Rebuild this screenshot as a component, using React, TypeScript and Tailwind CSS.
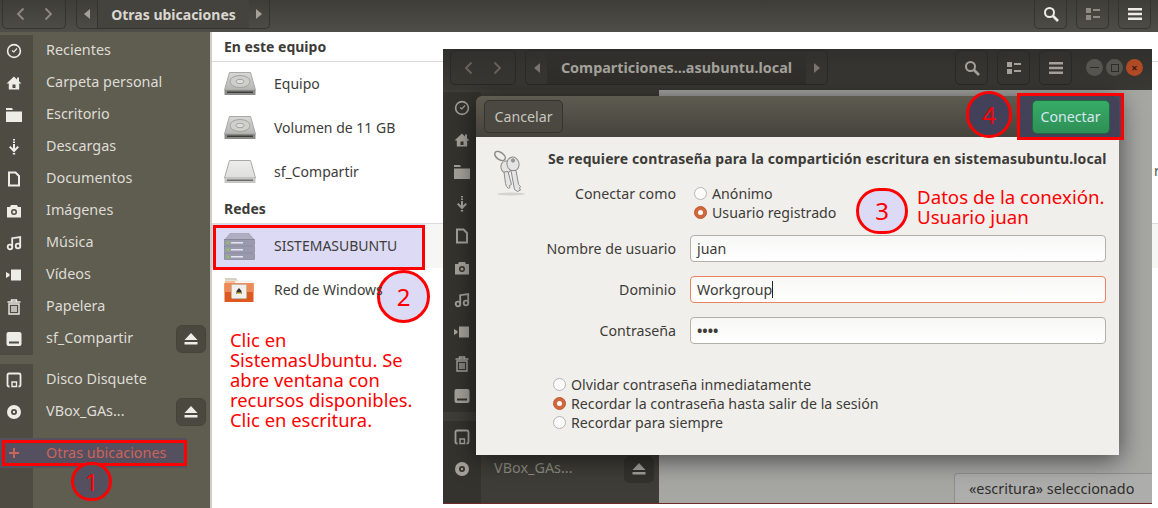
import React from 'react';

const FONT = "font-['Noto_Sans','Open_Sans',sans-serif]";

type IconName =
  | 'clock' | 'home' | 'folder' | 'download' | 'doc' | 'camera' | 'music'
  | 'video' | 'trash' | 'drive' | 'floppy' | 'disc' | 'plus';

function SideIcon({ name, className = '' }: { name: IconName; className?: string }) {
  const common = { width: 16, height: 16, viewBox: '0 0 16 16', className };
  switch (name) {
    case 'clock':
      return (
        <svg {...common} fill="none" stroke="currentColor" strokeWidth="1.6">
          <circle cx="8" cy="8" r="6.4" />
          <path d="M11 5.5 7.8 9 6 7.5" strokeWidth="1.2" />
        </svg>
      );
    case 'home':
      return (
        <svg {...common} fill="currentColor">
          <path fillRule="evenodd" d="M8 1.500.5 8.500h2.300v6h10.400v-6h2.300L13 6.300V2.500h-2v1.900zM6.500 9.500h3v3.500h-3z" />
        </svg>
      );
    case 'folder':
      return (
        <svg {...common} fill="currentColor">
          <path d="M0 1h6l1 2H0zM0 4.500h16V15H0z" />
        </svg>
      );
    case 'download':
      return (
        <svg {...common} fill="currentColor">
          <path d="M7 0h2v1.500H7zM7 2.500h2V4H7zM7 5h2v4.500L11.500 7 13 8.300 8 13.500 3 8.300 4.500 7 7 9.500zM6.800 14h2.400v1.500H6.800z" />
        </svg>
      );
    case 'doc':
      return (
        <svg {...common} fill="none" stroke="currentColor" strokeWidth="2">
          <path d="M3 1.500h6.500l3.500 3.500v9.500H3z" />
        </svg>
      );
    case 'camera':
      return (
        <svg {...common} fill="currentColor">
          <path fillRule="evenodd" d="M5 2h6l1 2h3v10.500H1V4h3zM8 6a3 3 0 1 0 0 6 3 3 0 0 0 0-6zm0 1.500a1.500 1.500 0 1 1 0 3 1.500 1.500 0 0 1 0-3z" />
        </svg>
      );
    case 'music':
      return (
        <svg {...common} fill="none" stroke="currentColor" strokeWidth="1.800">
          <circle cx="4" cy="12" r="2.300" />
          <circle cx="12" cy="11" r="2.300" />
          <path d="M6.200 12V3.200L14.200 2v9" />
        </svg>
      );
    case 'video':
      return (
        <svg {...common} fill="currentColor">
          <path d="M5 2.500h10v11H5zM0 5l3.500 2v2L0 11z" />
        </svg>
      );
    case 'trash':
      return (
        <svg {...common} fill="none" stroke="currentColor" strokeWidth="1.400">
          <path d="M1.500 3h13M5.500 3V1h5v2M3 5h10v10H3zM6 7v6M8 7v6M10 7v6" />
        </svg>
      );
    case 'drive':
      return (
        <svg {...common} fill="currentColor">
          <path fillRule="evenodd" d="M2.500 1h11A2 2 0 0 1 15.500 3v10a2 2 0 0 1-2 2h-11a2 2 0 0 1-2-2V3a2 2 0 0 1 2-2zM3 10.500v2h10v-2z" />
        </svg>
      );
    case 'floppy':
      return (
        <svg {...common} fill="none" stroke="currentColor" strokeWidth="1.800">
          <path d="M3 1.500h10a1.500 1.500 0 0 1 1.500 1.500v10a1.500 1.500 0 0 1-1.500 1.500h-.5M3.500 14.500H3A1.500 1.500 0 0 1 1.500 13V3A1.500 1.500 0 0 1 3 1.500" />
          <path d="M6 14.500V10h4.500v4.500z" strokeWidth="1.400" />
        </svg>
      );
    case 'disc':
      return (
        <svg {...common} fill="currentColor">
          <path fillRule="evenodd" d="M8 1a7 7 0 1 1 0 14A7 7 0 0 1 8 1zm0 4a3 3 0 1 0 0 6 3 3 0 0 0 0-6zm0 1.800a1.200 1.200 0 1 1 0 2.400 1.200 1.200 0 0 1 0-2.400z" />
        </svg>
      );
    case 'plus':
      return (
        <svg {...common} fill="currentColor">
          <path d="M7 3h2v4h4v2H9v4H7V9H3V7h4z" />
        </svg>
      );
  }
}

function Eject({ className = '' }: { className?: string }) {
  return (
    <svg width="14" height="12" viewBox="0 0 14 12" fill="currentColor" className={className}>
      <path d="M7 0l6.500 7H.5zM.5 9h13v2.500H.5z" />
    </svg>
  );
}

function HdIcon({ light = false }: { light?: boolean }) {
  const id = light ? 'hd-light' : 'hd-dark';
  return (
    <svg width="32" height="24" viewBox="0 0 32 24">
      <defs>
        <linearGradient id={id} x1="0" y1="0" x2="0" y2="1">
          <stop offset="0" stopColor={light ? '#eeeeec' : '#d8d8d6'} />
          <stop offset="1" stopColor={light ? '#dededc' : '#b4b4b1'} />
        </linearGradient>
      </defs>
      <path d="M5.500 .5h21L31.500 18H.5z" fill={`url(#${id})`} stroke="#a8a8a5" />
      {!light && <ellipse cx="16" cy="9.500" rx="10" ry="6" fill="#cfcfcc" stroke="#a3a39f" />}
      {!light && <ellipse cx="16" cy="9.500" rx="4" ry="2.200" fill="#dededc" stroke="#a3a39f" />}
      <rect x=".5" y="18" width="31" height="5" fill={light ? '#c6c6c3' : '#8a8a87'} />
      <rect x="3" y="19.500" width="26" height="1.500" fill={light ? '#6f6f6c' : '#3d3d3b'} />
    </svg>
  );
}

function ServerIcon() {
  return (
    <svg width="31" height="27" viewBox="0 0 31 27">
      <path d="M6 .5h19l5 6H1z" fill="#aeaec0" stroke="#8f8fa0" strokeWidth="0.500" />
      {[6.500, 13.500, 20.500].map(y => (
        <g key={y}>
          <rect x=".5" y={y} width="30" height="6" fill="#9a9aae" stroke="#6e6e7e" strokeWidth="0.500" />
          <rect x="2.500" y={y + 2} width="3" height="2.500" fill="#8fc060" />
          <rect x="7" y={y + 2.500} width="12" height="1.500" fill="#e6e6f2" />
        </g>
      ))}
    </svg>
  );
}

function WinFolderIcon() {
  return (
    <svg width="30" height="24" viewBox="0 0 30 24">
      <path d="M1 0h11l2 3H1z" fill="#d8cfc4" />
      <rect x="1" y="2.500" width="28" height="2" fill="#f3f1ee" />
      <rect x="1" y="3.500" width="10" height="1" fill="#f0873f" />
      <rect x=".5" y="5" width="29" height="19" fill="#dc5a22" />
      <rect x=".5" y="5" width="29" height="9" fill="#ed8a55" />
      <rect x="7.500" y="6.500" width="15" height="14" rx="1" fill="#f2efea" stroke="#c2b8ac" />
      <path d="M12.500 13l2.500-3 2.500 3v3h-5z" fill="#2e2e2c" />
      <rect x="13" y="14.500" width="4" height="1.500" fill="#d9c84d" />
    </svg>
  );
}

function KeysIcon() {
  return (
    <svg width="36" height="46" viewBox="0 0 36 46" fill="#e4e4e2" stroke="#8a8a86" strokeWidth="1">
      <ellipse cx="7" cy="6" rx="6" ry="3.500" transform="rotate(35 7 6)" fill="none" strokeWidth="1.500" />
      <ellipse cx="13" cy="17" rx="5" ry="6" transform="rotate(-12 13 17)" />
      <path d="M11 22l4-.5 3.500 13-2 1 .5 2-1.500 1-2-2-1-3z" />
      <ellipse cx="20" cy="14" rx="6" ry="7" transform="rotate(-12 20 14)" />
      <circle cx="20" cy="10.500" r="1.600" fill="#9a9a96" />
      <path d="M18 20.500h5l2.500 14 2 2-1 1.500 1 2-3 1.500-3-2z" />
      <ellipse cx="18" cy="44" rx="14" ry="1.500" fill="#d4d2cf" stroke="none" />
    </svg>
  );
}

function NavGlyph({ d, className = '' }: { d: string; className?: string }) {
  return (
    <svg width="16" height="16" viewBox="0 0 16 16" fill="none" stroke="currentColor" strokeWidth="1.800" className={className}>
      <path d={d} />
    </svg>
  );
}

function Tri({ dir }: { dir: 'left' | 'right' }) {
  return (
    <svg width="6" height="10" viewBox="0 0 6 10" fill="currentColor">
      <path d={dir === 'left' ? 'M6 0v10L0 5z' : 'M0 0v10l6-5z'} />
    </svg>
  );
}

function Search({ size = 16 }: { size?: number }) {
  return (
    <svg width={size} height={size} viewBox="0 0 16 16" fill="none" stroke="currentColor" strokeWidth="2">
      <circle cx="6.500" cy="6.500" r="4.500" />
      <path d="M10 10l5 5" strokeWidth="2.600" />
    </svg>
  );
}

function GridView() {
  return (
    <svg width="14" height="12" viewBox="0 0 14 12" fill="currentColor">
      <path d="M0 0h5v5H0zM0 7h5v5H0zM7 1h7v2H7zM7 8h7v2H7z" />
    </svg>
  );
}

function Burger() {
  return (
    <svg width="14" height="12" viewBox="0 0 14 12" fill="currentColor">
      <path d="M0 0h14v2.500H0zM0 4.800h14v2.500H0zM0 9.500h14V12H0z" />
    </svg>
  );
}

const PLACES: { icon: IconName; label: string; eject?: boolean; gap?: boolean }[] = [
  { icon: 'clock', label: 'Recientes' },
  { icon: 'home', label: 'Carpeta personal' },
  { icon: 'folder', label: 'Escritorio' },
  { icon: 'download', label: 'Descargas' },
  { icon: 'doc', label: 'Documentos' },
  { icon: 'camera', label: 'Imágenes' },
  { icon: 'music', label: 'Música' },
  { icon: 'video', label: 'Vídeos' },
  { icon: 'trash', label: 'Papelera' },
  { icon: 'drive', label: 'sf_Compartir', eject: true },
  { icon: 'floppy', label: 'Disco Disquete', gap: true },
  { icon: 'disc', label: 'VBox_GAs...', eject: true },
];

function Sidebar() {
  return (
    <aside className="w-[210px] shrink-0 flex flex-col bg-[#5f5c50] text-[14.4px] text-[#dedcd6] pt-[3px]">
      {PLACES.map(p => (
        <div key={p.label} className={'h-8 flex items-center ' + (p.gap ? 'mt-[9px]' : '')}>
          <div className="w-[33px] h-full shrink-0 bg-[#4d4b42] flex items-center justify-center text-[#eeece7] pr-[5px]">
            <SideIcon name={p.icon} />
          </div>
          <span className="ml-[13px] flex-1 -mt-[2px]">{p.label}</span>
          {p.eject && (
            <div className="w-[30px] h-[28px] mr-[4px] rounded-md bg-[#4a483f] border border-[#45433b] flex items-center justify-center text-[#eeece7]">
              <Eject />
            </div>
          )}
        </div>
      ))}
      <div className="h-[10px] flex"><div className="w-[33px] bg-[#4d4b42]" /></div>
      <div className="w-[187px] h-[30px] flex items-center bg-[#55505f] text-[#c9655c]">
        <div className="w-[33px] flex items-center justify-center pr-[5px]">
          <SideIcon name="plus" />
        </div>
        <span className="ml-[13px]">Otras ubicaciones</span>
      </div>
      <div className="flex-1 flex"><div className="w-[33px] bg-[#4d4b42]" /></div>
    </aside>
  );
}

function SectionTitle({ children }: { children: React.ReactNode }) {
  return (
    <div className="h-[30px] pl-[12px] flex items-center font-bold text-[14px] text-[#3d3c38] border-b border-[#dcdbd8]">
      {children}
    </div>
  );
}

function DeviceRow({ icon, label }: { icon: React.ReactNode; label: string }) {
  return (
    <div className="h-11 flex items-center text-[14px] text-[#3d3c38]">
      <div className="w-[62px] pl-[12px] flex items-center">{icon}</div>
      <span className="relative z-10 -mt-[2px]">{label}</span>
    </div>
  );
}

function Circle({ n, className }: { n: string; className: string }) {
  return (
    <div className={'absolute rounded-full border-[3px] border-[#fe0000] flex items-center justify-center text-[#fe0000] text-[24px] ' + className}>
      {n}
    </div>
  );
}

function Field({ label, value, focused = false, caret = false, dots = false }: { label: string; value: string; focused?: boolean; caret?: boolean; dots?: boolean }) {
  return (
    <div className="h-[27px] flex items-center">
      <label className="w-[200px] text-right text-[14.200px] text-[#3d3c38]">{label}</label>
      <div className={'ml-[14px] w-[416px] h-[27px] rounded-[4px] border px-[6px] flex items-center text-[14.200px] text-[#3d3c38] bg-gradient-to-b from-[#f7f7f6] to-white ' + (focused ? 'border-[#e9845e]' : 'border-[#b3b0aa]')}>
        <span className={dots ? 'font-bold' : ''}>{value}</span>
        {caret && <span className="w-px h-[17px] bg-[#222]" />}
      </div>
    </div>
  );
}

function Radio({ label, on = false }: { label: string; on?: boolean }) {
  return (
    <div className="h-[19px] flex items-center text-[14.200px] text-[#3d3c38]">
      <span className={'w-[13px] h-[13px] rounded-full border flex items-center justify-center mr-[5px] ' + (on ? 'bg-[#d3673c] border-[#b95a33]' : 'bg-[#fbfbfa] border-[#b8b5af]')}>
        {on && <span className="w-[5px] h-[5px] rounded-full bg-white" />}
      </span>
      {label}
    </div>
  );
}

function ToolBtn({ children, className = '' }: { children: React.ReactNode; className?: string }) {
  return (
    <div className={'w-[33px] rounded-[5px] border flex items-center justify-center ' + className}>
      {children}
    </div>
  );
}

function BackWindow() {
  return (
    <div className="h-full flex flex-col">
      <header className="h-8 shrink-0 bg-gradient-to-b from-[#3f3d38] to-[#4f4d47] flex items-start">
        <div className="ml-[2px] w-[64px] h-[29px] rounded-b-[5px] border border-t-0 border-[#35332e] flex items-center justify-around px-[4px] text-[#8d8b84]">
          <NavGlyph d="M10.500 2.500 5 8l5.500 5.500" />
          <NavGlyph d="M5.500 2.500 11 8l-5.500 5.500" />
        </div>
        <div className="ml-[10px] w-[194px] h-[29px] rounded-b-[5px] border border-t-0 border-[#35332e] flex items-center text-[#d9d7d0]">
          <div className="w-[21px] h-full flex items-center justify-center text-[#a3a19a] border-r border-[#35332e]"><Tri dir="left" /></div>
          <div className="w-[151px] h-full bg-[#45433e] flex items-center justify-center font-bold text-[14px]">Otras ubicaciones</div>
          <div className="flex-1 flex items-center justify-center text-[#a3a19a]"><Tri dir="right" /></div>
        </div>
        <div className="ml-auto mr-[7px] flex gap-[9px]">
          <ToolBtn className="border-t-0 rounded-t-none h-[29px] border-[#35332e] text-[#eeece7]"><Search /></ToolBtn>
          <ToolBtn className="border-t-0 rounded-t-none h-[29px] border-[#35332e] text-[#8d8b84]"><GridView /></ToolBtn>
          <ToolBtn className="border-t-0 rounded-t-none h-[29px] border-[#35332e] text-[#eeece7]"><Burger /></ToolBtn>
        </div>
      </header>
      <div className="flex-1 flex min-h-0">
        <Sidebar />
        <div className="w-[2px] bg-[#cfcdc9]" />
        <main className="flex-1 bg-white relative">
          <SectionTitle>En este equipo</SectionTitle>
          <DeviceRow icon={<HdIcon />} label="Equipo" />
          <DeviceRow icon={<HdIcon />} label="Volumen de 11 GB" />
          <DeviceRow icon={<HdIcon light />} label="sf_Compartir" />
          <SectionTitle>Redes</SectionTitle>
          <div className="bg-[#f6f6f5]">
            <div className="w-[213px] bg-[#dcdaf5]">
              <DeviceRow icon={<ServerIcon />} label="SISTEMASUBUNTU" />
            </div>
          </div>
          <DeviceRow icon={<WinFolderIcon />} label="Red de Windows" />
        </main>
      </div>
    </div>
  );
}

function FrontWindow() {
  return (
    <section className="absolute left-[443px] top-[49px] w-[709px] h-[455px] flex flex-col bg-[#a6a6a3] border-b border-[#6e2b2b]">
      <header className="h-[41px] shrink-0 bg-gradient-to-b from-[#302f2b] to-[#3a3934] flex items-start pt-[1px] pl-[7px] pr-[9px]">
        <div className="w-[66px] h-[35px] rounded-[5px] border border-[#2a2926] flex items-center justify-around px-[4px] text-[#66645d]">
          <NavGlyph d="M10.500 2.500 5 8l5.500 5.500" />
          <NavGlyph d="M5.500 2.500 11 8l-5.500 5.500" />
        </div>
        <div className="ml-[9px] w-[303px] h-[35px] rounded-[5px] border border-[#2a2926] flex items-center text-[#77756e]">
          <div className="w-[21px] flex justify-center"><Tri dir="left" /></div>
          <div className="w-[259px] h-full bg-[#302f2c] flex items-center justify-center font-bold text-[14.400px] text-[#a3a19a]">Comparticiones...asubuntu.local</div>
          <div className="flex-1 flex justify-center"><Tri dir="right" /></div>
        </div>
        <div className="ml-auto flex items-start gap-[9px]">
          <ToolBtn className="h-[35px] border-[#2a2926] text-[#a3a19a]"><Search /></ToolBtn>
          <ToolBtn className="h-[35px] border-[#2a2926] text-[#a3a19a]"><GridView /></ToolBtn>
          <ToolBtn className="h-[35px] border-[#2a2926] text-[#a3a19a]"><Burger /></ToolBtn>
          <div className="ml-[5px] mt-[9px] flex gap-[3px]">
            <span className="w-[17px] h-[17px] rounded-full bg-[#565550] flex items-center justify-center"><span className="w-[9px] h-px bg-[#2d2c29]" /></span>
            <span className="w-[17px] h-[17px] rounded-full bg-[#565550] flex items-center justify-center"><span className="w-[8px] h-[8px] border border-[#2d2c29]" /></span>
            <span className="w-[17px] h-[17px] rounded-full bg-[#b04a25] flex items-center justify-center text-[#3a1a0c] text-[11px] leading-none font-bold">×</span>
          </div>
        </div>
      </header>
      <div className="flex-1 flex min-h-0">
        <aside className="w-[216px] shrink-0 flex flex-col bg-[#3f3d37] pt-[2px] text-[14.400px] text-[#8f8d85]">
          {PLACES.map(p => (
            <div key={p.label} className={'h-8 flex items-center ' + (p.gap ? 'mt-[9px]' : '')}>
              <div className="w-[38px] h-full shrink-0 bg-[#34332e] flex items-center justify-center text-[#a3a19a]">
                <SideIcon name={p.icon} />
              </div>
              <span className="ml-[13px] flex-1 -mt-[2px] whitespace-nowrap">{p.label}</span>
              {p.eject && (
                <div className="w-[30px] h-[27px] mr-[5px] rounded-md bg-[#33322d] flex items-center justify-center text-[#a3a19a]"><Eject /></div>
              )}
            </div>
          ))}
          <div className="flex-1 w-[38px] bg-[#34332e]" />
        </aside>
        <div className="flex-1 flex flex-col justify-end items-end">
          <div className="w-[198px] h-[30px] border-t border-l border-[#8f8f8c] rounded-tl-[4px] bg-[#adadab] flex items-center pl-[14px] text-[14.400px] text-[#2f2e2b]">«escritura» seleccionado</div>
        </div>
      </div>
    </section>
  );
}

function Dialog() {
  return (
    <section className="absolute left-[476px] top-[96px] w-[643px] h-[359px] flex flex-col shadow-[0_4px_26px_rgba(0,0,0,0.6)] rounded-t-[6px] overflow-hidden">
      <header className="h-[41px] shrink-0 bg-gradient-to-b from-[#5e5b51] to-[#45433c] flex items-center pl-[8px]">
        <button className="w-[79px] h-[33px] rounded-[5px] border border-[#35332e] bg-[#4a4840] text-[14.200px] text-[#c7c5be]">Cancelar</button>
      </header>
      <div className="flex-1 bg-[#f1efec] relative pt-[11px]">
        <div className="absolute left-[17px] top-[13px]"><KeysIcon /></div>
        <p className="ml-[72px] h-[20px] font-bold text-[14px] text-[#3d3c38] whitespace-nowrap tracking-[0.120px]">Se requiere contraseña para la compartición escritura en sistemasubuntu.local</p>
        <div className="mt-[17px] flex">
          <span className="w-[200px] -mt-[2px] text-right text-[14.200px] text-[#3d3c38]">Conectar como</span>
          <div className="ml-[18px] -mt-[1px] flex flex-col">
            <Radio label="Anónimo" />
            <Radio label="Usuario registrado" on />
          </div>
        </div>
        <div className="mt-[13px] flex flex-col gap-[14px]">
          <Field label="Nombre de usuario" value="juan" />
          <Field label="Dominio" value="Workgroup" focused caret />
          <Field label="Contraseña" value="••••" dots />
        </div>
        <div className="mt-[31px] ml-[77px] flex flex-col">
          <Radio label="Olvidar contraseña inmediatamente" />
          <Radio label="Recordar la contraseña hasta salir de la sesión" on />
          <Radio label="Recordar para siempre" />
        </div>
      </div>
    </section>
  );
}

export default function App() {
  return (
    <div className={'relative w-[1158px] h-[508px] overflow-hidden bg-white ' + FONT}>
      <BackWindow />
      <span className="absolute left-[1154px] top-[160px] text-[14px] text-[#55544f]">rt</span>
      <FrontWindow />
      <Dialog />

      {/* callouts */}
      <div className="absolute left-[2px] top-[440px] w-[185px] h-[26px] border-[3px] border-[#fe0000]" />
      <div className="absolute left-[213px] top-[225px] w-[212px] h-[45px] border-[3px] border-[#fe0000]" />
      <div className="absolute left-[1017px] top-[93px] w-[107px] h-[47px] border-[3px] border-[#fe0000] bg-[#43405a]/90 flex items-center justify-center">
        <button className="w-[78px] h-[34px] rounded-[5px] border border-[#1f6b3f] bg-gradient-to-b from-[#37ab66] to-[#2e8f56] text-[14.200px] text-[#d6e8ee]">Conectar</button>
      </div>

      <Circle n="1" className="left-[71px] top-[462px] w-[41px] h-[39px] bg-[#55505f]" />
      <Circle n="2" className="left-[377px] top-[270px] w-[53px] h-[53px] bg-[#dcdaf5]" />
      <Circle n="3" className="left-[856px] top-[188px] w-[52px] h-[46px] bg-[#dcdaf5]" />
      <Circle n="4" className="left-[966px] top-[91px] w-[46px] h-[47px] bg-[#43405a]" />

      <p className="absolute left-[230px] top-[330px] w-[205px] text-[#fe0000] text-[18.400px] leading-[20px]">
        Clic en<br />SistemasUbuntu. Se<br />abre ventana con<br />recursos disponibles.<br />Clic en escritura.
      </p>
      <p className="absolute left-[917px] top-[187px] text-[#fe0000] text-[18.700px] leading-[20px] whitespace-nowrap">
        Datos de la conexión.<br />Usuario juan
      </p>
    </div>
  );
}
